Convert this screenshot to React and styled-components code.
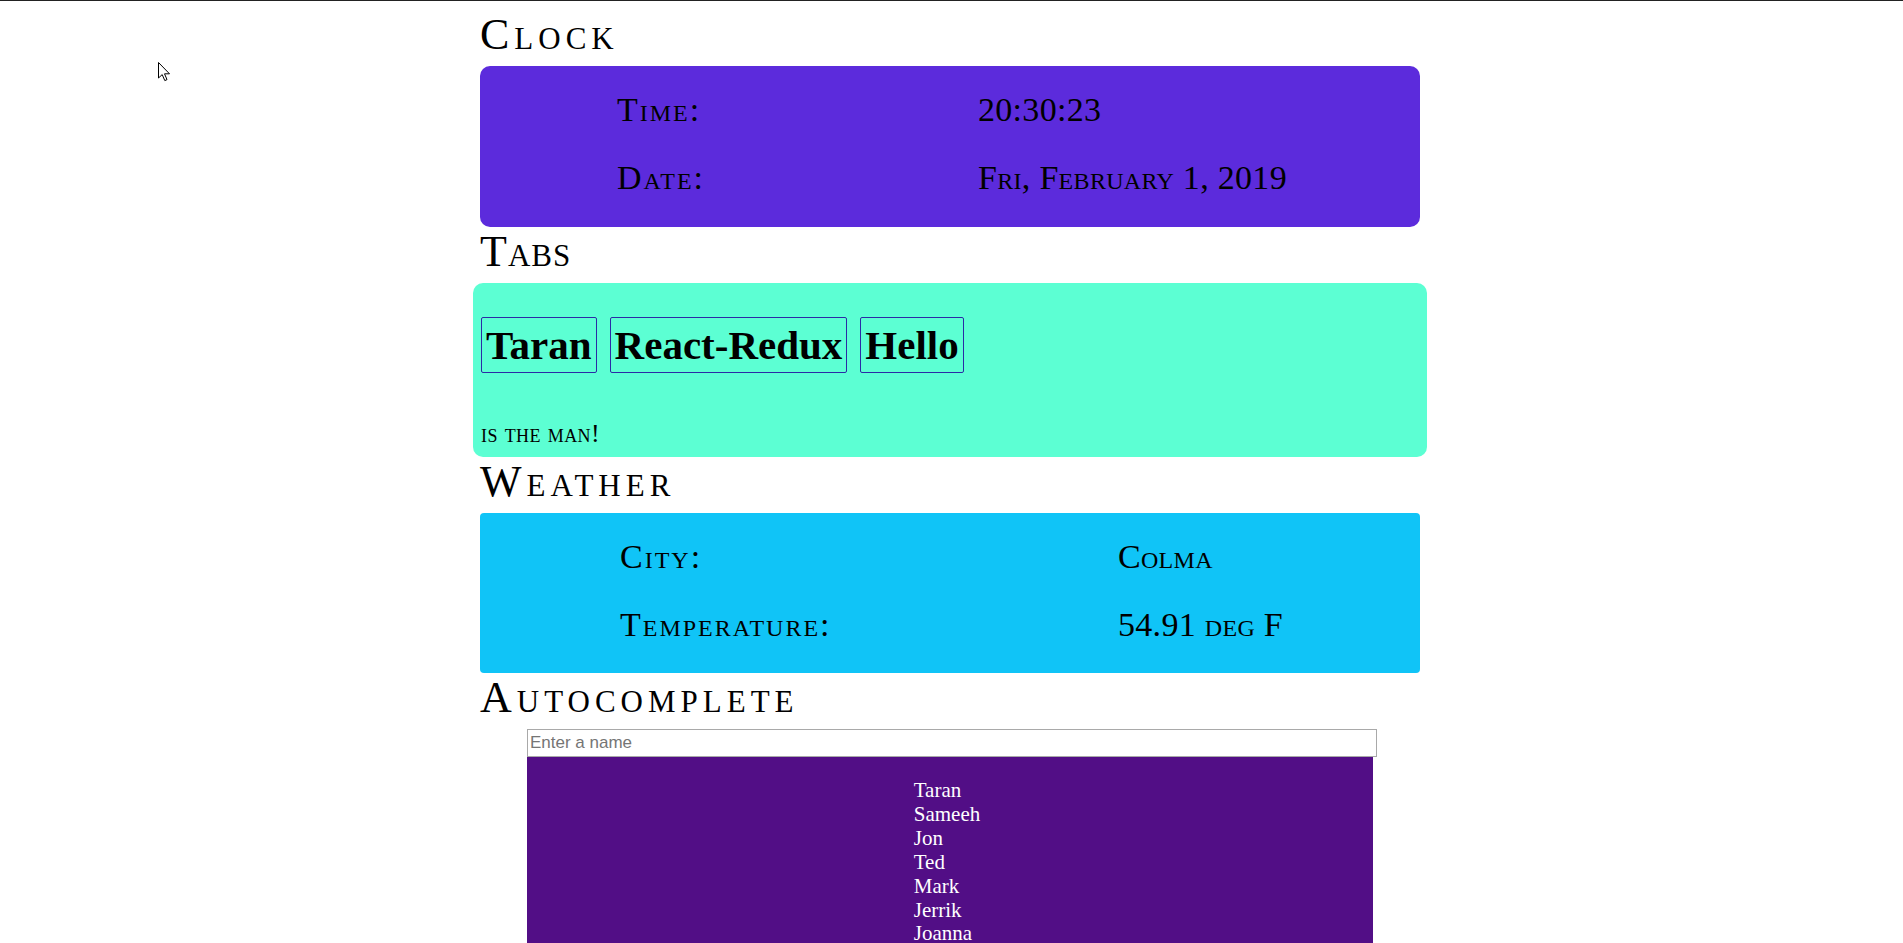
import styled, { createGlobalStyle } from "styled-components";

const GlobalStyle = createGlobalStyle`
    html {
        scrollbar-width: none;
    }
    body {
        margin: 0;
        background-color: #ffffff;
        font-family: "Liberation Serif", "Times New Roman", serif;
        color: #000000;
    }
`;

const Page = styled.div`
    position: relative;
    border-top: 1px solid #222222;
    padding: 9px 3px 0 0;
`;

const Container = styled.div`
    width: 940px;
    margin: 0 auto;
`;

const Title = styled.h1`
    margin: 0 0 6px;
    font-size: 44px;
    font-weight: 400;
    line-height: 50px;
    font-variant: small-caps;
    letter-spacing: ${(props) => (props.$tight ? 1 : 5)}px;
`;

const InfoPanel = styled.div`
    background-color: ${(props) => props.$bg};
    border-radius: ${(props) => props.$radius}px;
    padding: 10px 0 ${(props) => props.$bottom}px ${(props) => props.$indent}px;
`;

const Row = styled.div`
    display: grid;
    grid-template-columns: ${(props) => props.$labelWidth}px auto;
    height: 68px;
    line-height: 68px;
    font-size: 34px;
    font-variant: small-caps;
`;

const Label = styled.span`
    letter-spacing: 2px;
`;

const Value = styled.span`
    letter-spacing: 0.3px;
`;

const TabsPanel = styled.div`
    margin: 0 -7px;
    padding: 34px 8px 8px;
    background-color: #5cffd3;
    border-radius: 10px;
`;

const TabBar = styled.div`
    display: flex;
    gap: 13px;
    margin-bottom: 46px;
`;

const TabButton = styled.button`
    height: 56px;
    padding: 4px 4px 3px;
    border: 1px solid #2b2ba6;
    border-radius: 2px;
    background: transparent;
    font-family: "Liberation Serif", "Times New Roman", serif;
    font-size: 41px;
    font-weight: 700;
    line-height: 47px;
    color: #000000;
    cursor: pointer;
`;

const TabText = styled.div`
    font-size: 26px;
    line-height: 30px;
    font-variant: small-caps;
    letter-spacing: 0.4px;
`;

const Autocomplete = styled.div`
    display: flex;
    flex-direction: column;
    margin-left: 47px;
`;

const NameInput = styled.input`
    box-sizing: border-box;
    width: 850px;
    height: 28px;
    margin: 0;
    padding: 3px 2px;
    border: 1px solid #a9a9a9;
    font-family: "Liberation Sans", Arial, sans-serif;
    font-size: 17px;
    outline: none;
    &::placeholder {
        color: #757575;
    }
`;

const Suggestions = styled.div`
    width: 846px;
    padding: 22px 0 21px;
    background-color: #520e86;
    text-align: center;
`;

const NameList = styled.ul`
    display: inline-block;
    margin: 0;
    padding: 0 6px 0 0;
    list-style: none;
    text-align: left;
    font-size: 21px;
    line-height: 23.9px;
    color: #ffffff;
`;

const Cursor = styled.svg`
    position: absolute;
    left: 158px;
    top: 61px;
`;

const clockRows = [
    ["Time:", "20:30:23"],
    ["Date:", "Fri, February 1, 2019"],
];

const weatherRows = [
    ["City:", "Colma"],
    ["Temperature:", "54.91 deg F"],
];

const tabs = ["Taran", "React-Redux", "Hello"];

const names = ["Taran", "Sameeh", "Jon", "Ted", "Mark", "Jerrik", "Joanna"];

const App = () => {
    return (
        <Page>
            <GlobalStyle />
            <Container>
                <Title>Clock</Title>
                <InfoPanel $bg="#5c2bdc" $radius={10} $indent={137} $bottom={15}>
                    {clockRows.map(([label, value]) => (
                        <Row key={label} $labelWidth={361}>
                            <Label>{label}</Label>
                            <Value>{value}</Value>
                        </Row>
                    ))}
                </InfoPanel>

                <Title $tight>Tabs</Title>
                <TabsPanel>
                    <TabBar>
                        {tabs.map((tab) => (
                            <TabButton key={tab}>{tab}</TabButton>
                        ))}
                    </TabBar>
                    <TabText>is the man!</TabText>
                </TabsPanel>

                <Title>Weather</Title>
                <InfoPanel $bg="#10c4f7" $radius={4} $indent={140} $bottom={14}>
                    {weatherRows.map(([label, value]) => (
                        <Row key={label} $labelWidth={498}>
                            <Label>{label}</Label>
                            <Value>{value}</Value>
                        </Row>
                    ))}
                </InfoPanel>

                <Title>Autocomplete</Title>
                <Autocomplete>
                    <NameInput placeholder="Enter a name" />
                    <Suggestions>
                        <NameList>
                            {names.map((name) => (
                                <li key={name}>{name}</li>
                            ))}
                        </NameList>
                    </Suggestions>
                </Autocomplete>
            </Container>
            <Cursor width="13" height="20" viewBox="0 0 13 20">
                <path
                    d="M0.5 0.5 L0.5 16 L4.2 12.6 L6.8 18.6 L9 17.6 L6.5 11.8 L11.5 11.8 Z"
                    fill="#ffffff"
                    stroke="#000000"
                    strokeWidth="1"
                    strokeLinejoin="round"
                />
            </Cursor>
        </Page>
    );
};

export default App;
